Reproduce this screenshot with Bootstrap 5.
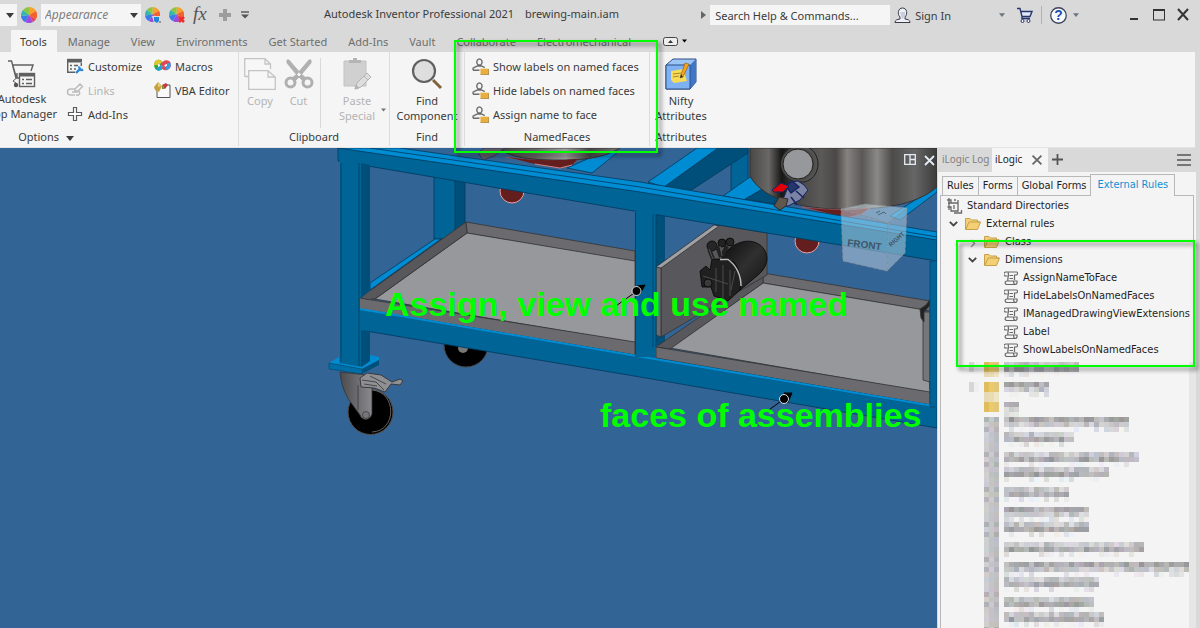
<!DOCTYPE html>
<html lang="en">
<head>
<meta charset="utf-8">
<meta name="viewport" content="width=device-width, initial-scale=1">
<title>Autodesk Inventor Professional 2021</title>
<link href="https://cdn.jsdelivr.net/npm/bootstrap@5.3.0/dist/css/bootstrap.min.css" rel="stylesheet">
<style>
:root{--bar:#d9d9d9;--face:#f5f5f5;--ink:#3b3b3b;--mark:#0f0}
body{font:11px/15px "Noto Sans","Open Sans",sans-serif;color:var(--ink);background:var(--bar)}
button{font:inherit;color:inherit;border:0;background:none;padding:0}
svg{display:block;flex:none;overflow:visible}
.titlebar{height:30px;background:var(--bar)}
.pick{position:relative;height:22px;background:var(--face)}
.pick.material{width:17px}
.pick.appearance{width:100px}
.pick select{appearance:none;border:0;background:none;width:100%;height:22px;padding:0 4px;font-style:italic;font-size:12px;line-height:20px;color:#808080}
.pick svg{position:absolute;right:3px;top:9px;pointer-events:none}
.doc-title{margin:0 0 3px 67px}
.search-box{width:180px;height:20px;border:0;background:var(--face);color:var(--ink);padding:0 5px;border-radius:0}
.search-box::placeholder{color:var(--ink);opacity:1}
.tabs{height:22px;background:var(--bar);padding-left:11px;gap:1px}
.tabs a{color:#6e6e6e;text-decoration:none;padding:3px 10px 0 9px;line-height:17px}
.tabs a+a{padding-left:10px}
.tabs a.on{background:var(--face);color:var(--ink)}
.ribbon{height:96px;background:var(--face);margin-right:5px;border-bottom:1px solid #e4e4e4}
.rgroup{border-right:1px solid #dcdcdc;margin-bottom:1px;height:94px;padding-top:2px}
.rbody{height:75px}
.big{text-align:center;display:flex;flex-direction:column;align-items:center;padding-top:4px;white-space:nowrap}
.big svg{margin-bottom:3px}
.small-tool{height:24px;display:flex;align-items:center;white-space:nowrap}
.dim{color:#b4b4b4}
.caption{text-align:center;line-height:15px}
.outline{position:absolute;border:2px solid var(--mark);filter:drop-shadow(3px 3px 2px rgba(0,0,0,.55));pointer-events:none;z-index:5}
.scene{position:relative;background:#336496;overflow:hidden;min-width:0}
.scene>svg{position:absolute;left:0;top:0;width:937px;height:480px}
.note{position:absolute;margin:0;font:bold 34px/40px "Liberation Sans",Arial,sans-serif;color:var(--mark);white-space:nowrap}
.vtools{position:absolute;right:2px;top:6px}
.side{width:263px;background:var(--bar);padding-left:1px;font-family:"DejaVu Sans Condensed","Liberation Sans",sans-serif;font-size:11px;color:#1e1e1e}
.dock{height:24px;font-family:"Noto Sans","Open Sans",sans-serif;font-size:10px;white-space:nowrap}
.dock-on{background:var(--face);width:56px;padding:0 6px 0 3px}
.pane{background:#f4f4f4;margin-right:4px;padding:2px 2px 0;min-height:0}
.subtabs{padding-left:2px}
.subtabs button{border:1px solid #b8b8b8;border-left-width:0;border-bottom:0;height:19px;padding:0 4px;margin-top:2px;white-space:nowrap}
.subtabs button:first-child{border-left-width:1px}
.subtabs button.on{height:22px;margin:0 0 -1px -1px;background:#f4f4f4;color:#1290d2;border-left-width:1px;padding:0 6px 2px;position:relative}
.treebox{border:1px solid #b8b8b8;border-bottom:0;min-height:0;padding-top:1px}
.treebox ul{list-style:none;margin:0;padding:0}
.trow{height:18px;display:flex;align-items:center;white-space:nowrap;gap:5px}
.mosaic{height:267px;margin-top:3px}
.page{height:100vh;overflow:hidden}
</style>
</head>
<body>
<svg width="0" height="0" class="position-absolute" aria-hidden="true">
<defs>
<symbol id="wheel" viewBox="-8 -8 16 16"><path fill="#f9a12c" d="M0 0V-8A8 8 0 0 1 7-4z"/><path fill="#f4622c" d="M0 0L7-4A8 8 0 0 1 7 4z"/><path fill="#e8455a" d="M0 0L7 4A8 8 0 0 1 4 7z"/><path fill="#9b4be0" d="M0 0L4 7A8 8 0 0 1-4 7z"/><path fill="#3a7be8" d="M0 0L-4 7A8 8 0 0 1-8 1z"/><path fill="#35b5b0" d="M0 0L-8 1A8 8 0 0 1-6-5z"/><path fill="#8cc63f" d="M0 0L-6-5A8 8 0 0 1 0-8z"/></symbol>
<symbol id="caret" viewBox="0 0 8 5"><path d="M0 0H8L4 5z" fill="currentColor"/></symbol>
<symbol id="who" viewBox="0 0 16 16"><path d="M1 11.500V9.500L5 7.500H9L12 9M1 11.500H7M7 .8A2.800 3 0 0 1 9 5.500C8.500 7 5.500 7 5 5.500A2.800 3 0 0 1 7 .8z" fill="none" stroke="#6b6b6b" stroke-width="1.300"/><path d="M7.500 10H16V16H8V11z" fill="#e8ad3c"/><path d="M8 16H16V11" fill="none" stroke="#8f8260"/></symbol>
<symbol id="folder" viewBox="0 0 16 13"><path d="M.5 12V1.500H5L6.500 3H12.500V5H15.500L12.500 12.500H.5z" fill="#f3d074" stroke="#c9a04a"/><path d="M1 12L4 5H15" fill="none" stroke="#c9a04a"/></symbol>
<symbol id="scroll" viewBox="0 0 14 14"><path d="M3.500 5H1.500A1.800 1.800 0 0 1 2 1H12.500C14 1 14 4 12 4H10.500V9M4 1.500C5.500 4 3 8 4 10M10 10H13C13.500 13 12 13.500 11 13.500H3C.5 13.500.5 10 3 10H9.500C9.500 12.500 10 13 11 13.500M5.500 4.500H9M5.500 7.500H9" fill="none" stroke="#686868" stroke-width="1.200"/></symbol>
<symbol id="down" viewBox="0 0 9 6"><path d="M.8.8L4.500 4.500L8.200.8" fill="none" stroke="#444" stroke-width="1.800"/></symbol>
</defs></svg>

<div class="page d-flex flex-column">
<header class="position-relative" style="z-index:2">
  <div class="titlebar d-flex align-items-center">
    <button class="pick material" aria-label="Material"><svg width="8" height="5"><use href="#caret"/></svg></button>
    <svg class="ms-1" width="16" height="16"><use href="#wheel"/></svg>
    <div class="pick appearance ms-1"><select aria-label="Appearance"><option>Appearance</option></select><svg width="8" height="5"><use href="#caret"/></svg></div>
    <div class="d-flex align-items-center gap-2 ms-1">
      <button aria-label="Adjust"><svg width="16" height="16" viewBox="0 0 16 16"><use href="#wheel" width="15" height="15"/><path d="M7 9H16V16H9z" fill="#d9d9d9"/><path d="M9 10H14V14L12 16L9 14z" fill="#2485d8"/><path d="M14 15H16" stroke="#555"/></svg></button>
      <button aria-label="Clear"><svg width="16" height="16" viewBox="0 0 16 16"><use href="#wheel" width="15" height="15"/><path d="M10 10L15 15M15 10L10 15" stroke="#ee2b2b" stroke-width="2.500"/></svg></button>
      <button aria-label="Parameters"><svg width="16" height="20" viewBox="0 0 16 20"><text x="0" y="15" font-family="Liberation Serif,serif" font-style="italic" font-size="19" fill="#555">fx</text></svg></button>
      <button aria-label="Add"><svg width="16" height="16" viewBox="0 0 16 16"><path d="M6 2H10V6H14V10H10V14H6V10H2V6H6z" fill="#9d9d9d"/></svg></button>
      <button class="nudge" aria-label="More"><svg width="12" height="16" viewBox="4 0 12 16"><path d="M4 5H12" stroke="#555" stroke-width="1.400"/><path d="M4 7.500H12L8 11.500z" fill="#555"/></svg></button>
    </div>
    <div class="doc-title text-nowrap ps-1">Autodesk Inventor Professional 2021 <span class="ms-2">brewing-main.iam</span></div>
    <div class="d-flex align-items-center ms-auto">
      <svg width="5" height="8" viewBox="0 0 5 8"><path d="M0 0L5 4L0 8z" fill="#666"/></svg>
      <input class="search-box mx-1" type="search" placeholder="Search Help &amp; Commands..." aria-label="Search help and commands">
      <button class="d-flex align-items-center"><svg class="me-1" width="17" height="17" viewBox="0 0 17 17"><path d="M1 15.500C1 13 3 12.500 6 12V10C3 7 4 1 8.500 1S14 7 11 10V12C14 12.500 16 13 16 15.500z" fill="#eef1f7" stroke="#3a3a44"/><path d="M6 5H11V10L8 12z" fill="#c9cfdd"/></svg>Sign In<svg class="text-secondary ms-5" width="6" height="4"><use href="#caret"/></svg></button>
      <button style="margin-left:11px" aria-label="App store"><svg width="17" height="16" viewBox="0 0 17 16"><path d="M1 1.500H4L6 9.500H14L16 4.500H5M6 9.500V11.500H14" fill="#e2e8f6" stroke="#27356b" stroke-width="1.400"/><circle cx="6.500" cy="14" r="1.500" fill="#fff" stroke="#27356b"/><circle cx="12.500" cy="14" r="1.500" fill="#fff" stroke="#27356b"/></svg></button>
      <div class="vr align-self-center mx-2" style="height:18px"></div>
      <button class="d-flex align-items-center" aria-label="Help"><svg width="17" height="17" viewBox="0 0 16 16"><circle cx="8" cy="8" r="7.300" fill="#f6f8fc" stroke="#3c4358" stroke-width="1.200"/><text x="8" y="12.500" text-anchor="middle" font-family="Liberation Sans,sans-serif" font-weight="bold" font-size="13" fill="#1a4fb4">?</text></svg><svg class="text-secondary" style="margin-left:6px" width="6" height="4"><use href="#caret"/></svg></button>
      <button style="margin-left:50px" aria-label="Minimize"><svg width="10" height="12" viewBox="0 0 10 12"><path d="M1 10H9" stroke="#333" stroke-width="2"/></svg></button>
      <button style="margin-left:14px" aria-label="Maximize"><svg width="12" height="12" viewBox="0 0 12 12"><rect x=".5" y="1" width="11" height="10" fill="none" stroke="#333"/><path d="M0 1H12" stroke="#333" stroke-width="2"/></svg></button>
      <button style="margin:0 11px 0 12px" aria-label="Close"><svg width="12" height="14" viewBox="0 0 12 14"><path d="M1 1L11 12M11 1L1 12" stroke="#333" stroke-width="2"/></svg></button>
    </div>
  </div>
  <nav class="tabs d-flex align-items-stretch">
    <a href="#" class="on">Tools</a><a href="#">Manage</a><a href="#">View</a><a href="#">Environments</a><a href="#">Get Started</a><a href="#">Add-Ins</a><a href="#">Vault</a><a href="#">Collaborate</a><a href="#">Electromechanical</a>
    <button class="d-flex align-items-center gap-1" style="margin-left:21px" aria-label="Ribbon display"><svg width="15" height="9" viewBox="0 0 15 9"><rect x=".5" y=".5" width="14" height="8" rx="2" fill="#eee" stroke="#444"/><path d="M5 6L7.500 3L10 6z" fill="#333"/></svg><svg width="5" height="4" class="text-black"><use href="#caret"/></svg></button>
  </nav>
  <div class="ribbon d-flex">
    <section class="rgroup" style="width:239px;overflow:hidden">
      <div class="rbody d-flex">
        <button class="big align-self-start" style="width:76px;margin-left:-16px"><svg width="28" height="30" viewBox="0 0 28 30"><path d="M0 3H3.500L8.500 20M4.500 7H25L23 13M9 15V20M4.500 7L8 20H11" fill="none" stroke="#606060" stroke-width="1.400"/><circle cx="8" cy="27" r="2.200" fill="#555"/><path d="M8.500 20L5 23L8 25" fill="none" stroke="#606060"/><rect x="11.500" y="15.500" width="15" height="13" fill="#f5f5f5" stroke="#606060" stroke-width="1.400"/><path d="M11 17H27" stroke="#606060" stroke-width="3"/><path d="M14 21.500H16M18 21.500H24M14 25.500H16M18 25.500H24" stroke="#606060" stroke-width="1.400"/></svg>Autodesk<br>App Manager</button>
        <div style="margin-left:7px;width:87px">
          <button class="small-tool"><svg class="me-1" width="17" height="16" viewBox="0 0 17 16"><path d="M.7 2V14.300H8M14.300 5V8M0 2.500H15" fill="none" stroke="#606060" stroke-width="1.400"/><path d="M0 .8H15V4.500H0z" fill="#606060"/><path d="M3 7.500H5M3 11H5M7 7.500H11M7 11H9" stroke="#606060" stroke-width="1.500"/><path d="M9 15L13 11M12.500 8.500A2.400 2.400 0 0 0 16 11.500" stroke="#2485d8" stroke-width="2.400" fill="none"/></svg>Customize</button>
          <button class="small-tool dim" disabled><svg class="me-1" width="17" height="16" viewBox="0 0 17 16"><path d="M8 13H3.500A3 3 0 0 1 3.500 7H8M5 10H11M8 7L13 2L15.500 4.500L11 9H8zM12 9C14 13 11 13.500 9 13" fill="none" stroke="#bdbdbd" stroke-width="1.500"/></svg>Links</button>
          <button class="small-tool"><svg class="me-1" width="17" height="16" viewBox="0 0 17 16"><path d="M6.500 1.500H9.500V6.500H14.500V9.500H9.500V14.500H6.500V9.500H1.500V6.500H6.500z" fill="#fff" stroke="#5a5a5a" stroke-width="1.200"/></svg>Add-Ins</button>
        </div>
        <div>
          <button class="small-tool"><svg class="me-1" width="17" height="16" viewBox="0 0 17 16"><g fill="none" stroke-width="3.600"><path d="M8 7C6 2 2 3 2 7S5 12 8 9" stroke="#30a838"/><path d="M2 7C2 3 5 3 7 5" stroke="#e8c32c"/><path d="M3 10C5 12 7 10 8 8" stroke="#20a0d8"/><path d="M8 8C11 2 15 4 15 7S11 12 9 9" stroke="#e04858"/><path d="M12 10.500C15 10 15.500 7 14.500 5" stroke="#3d9be0"/></g></svg>Macros</button>
          <button class="small-tool"><svg class="me-1" width="17" height="18" viewBox="0 0 17 18"><path d="M3 9V16.500H16V4H13" fill="#fafafa" stroke="#555"/><path d="M0 6L4 1L8 5L5 11L1 9z" fill="#c4a23c"/><path d="M4 1L8 5L4 6z" fill="#e4cd78"/><path d="M8 4L12 2L14 4L11 8z" fill="#c03c40"/><path d="M8 4L11 8L8 8z" fill="#7d8c3a"/></svg>VBA Editor</button>
        </div>
      </div>
      <div class="caption" style="width:92px">Options <svg class="d-inline-block ms-1" width="8" height="5"><use href="#caret"/></svg></div>
    </section>
    <section class="rgroup" style="width:151px">
      <div class="rbody d-flex">
        <button class="big dim align-self-start" style="width:42px" disabled><svg width="32" height="32" viewBox="0 0 32 32"><path d="M.7 18.500V.7H21L26.500 6V11M21 .7V6H26.500M.7 18.500H4M4.700 12.700H24L31.300 19V31.300H4.700zM24 12.700V19H31" fill="#f7f7f7" stroke="#c4c4c4" stroke-width="1.300"/></svg>Copy</button>
        <button class="big dim align-self-start" style="width:35px" disabled><svg width="30" height="32" viewBox="0 0 30 32"><g fill="none" stroke="#b0b0b0"><circle cx="6.500" cy="24.500" r="4.500" stroke-width="3"/><circle cx="23.500" cy="24.500" r="4.500" stroke-width="3"/></g><path d="M3 2V5L13 17L20 24L22 20L17 16L5 2zM27 2V5L17 17L10 24L8 20L13 16L25 2z" fill="#b0b0b0" stroke="#b0b0b0"/></svg>Cut</button>
        <div class="vr ms-1 me-1 mt-1" style="height:70px;opacity:.15"></div>
        <button class="big dim align-self-start position-relative" style="width:64px" disabled><svg width="28" height="32" viewBox="0 0 28 32"><path d="M1 3H23V28H1z" fill="#d0d0d0" stroke="#c2c2c2"/><path d="M6 5V2H10V0H14V2H18V5z" fill="#b4b4b4"/><path d="M12 31L14 25L24 15L28 19L18 29z" fill="#dedede" stroke="#b4b4b4"/><path d="M21 18L25 22M12 31L13 27L16 30z" stroke="#b4b4b4" fill="#b4b4b4"/></svg>Paste<br>Special<svg class="position-absolute text-secondary m-0" style="right:3px;top:54px" width="5" height="4"><use href="#caret"/></svg></button>
      </div>
      <div class="caption">Clipboard</div>
    </section>
    <section style="width:74px;padding-top:2px">
      <div class="rbody"><button class="big mx-auto"><svg width="32" height="32" viewBox="0 0 32 32"><path d="M22 22L30 30" stroke="#80623c" stroke-width="3"/><circle cx="13" cy="13" r="11" fill="#dedede" stroke="#606060" stroke-width="2.200"/></svg>Find<br>Component</button></div>
      <div class="caption">Find</div>
    </section>
    <section class="rgroup position-relative" style="width:186px;border-left:1px solid #dcdcdc">
      <div class="rbody" style="padding-left:7px">
        <button class="small-tool"><svg class="me-1" width="17" height="17"><use href="#who"/></svg>Show labels on named faces</button>
        <button class="small-tool"><svg class="me-1" width="17" height="17"><use href="#who"/></svg>Hide labels on named faces</button>
        <button class="small-tool"><svg class="me-1" width="17" height="17"><use href="#who"/></svg>Assign name to face</button>
      </div>
      <div class="caption">NamedFaces</div>
      <div class="outline" style="inset:-12px -9px -7px -11px"></div>
    </section>
    <section style="width:62px;padding-top:2px">
      <div class="rbody"><button class="big mx-auto"><svg width="32" height="32" viewBox="0 0 32 32"><path d="M1 7L8 1H31V24L25 31H1z" fill="#9cc4f4" stroke="#2c4e86"/><path d="M25 7L31 1V24L25 31z" fill="#3f76c8"/><path d="M1 7H25V31H1z" fill="#7fb2f2" stroke="#2c4e86"/><path d="M6 13L18 11L22 23L9 25L6 22z" fill="#f8dc58"/><path d="M8 16L16 15M8 19L14 18" stroke="#a88828"/><path d="M15 20L20 5L24 6L18 19z" fill="#f6a21c" stroke="#8a5a18" stroke-width=".6"/><path d="M15 20L16 16L18 19z" fill="#333"/></svg>Nifty<br>Attributes</button></div>
      <div class="caption">Attributes</div>
    </section>
  </div>
</header>

<main class="d-flex flex-fill" style="min-height:0">
  <section class="scene flex-fill" aria-label="Model view">
  <svg viewBox="0 148 937 480" preserveAspectRatio="xMinYMin slice" aria-hidden="true">
    <defs>
      <linearGradient id="tank"><stop offset="0" stop-color="#4a4845"/><stop offset=".1" stop-color="#6a6866"/><stop offset=".17" stop-color="#161616"/><stop offset=".25" stop-color="#444"/><stop offset=".38" stop-color="#5c5a58"/><stop offset=".46" stop-color="#4a4846"/><stop offset=".52" stop-color="#85827f"/><stop offset=".6" stop-color="#5a5856"/><stop offset=".68" stop-color="#8b8986"/><stop offset=".76" stop-color="#4c4b49"/><stop offset=".88" stop-color="#666"/><stop offset="1" stop-color="#3c3b3a"/></linearGradient>
      <linearGradient id="tank2"><stop offset="0" stop-color="#444"/><stop offset=".3" stop-color="#666"/><stop offset=".55" stop-color="#a0a0a0"/><stop offset=".75" stop-color="#484848"/><stop offset="1" stop-color="#777"/></linearGradient>
      <linearGradient id="fork"><stop offset="0" stop-color="#4a4a4d"/><stop offset="1" stop-color="#8a8a8e"/></linearGradient>
      <linearGradient id="mot" x1="0" y1="0" x2="1" y2="1"><stop offset="0" stop-color="#0c0c0c"/><stop offset=".5" stop-color="#303030"/><stop offset="1" stop-color="#111"/></linearGradient>
    </defs>
    <g stroke="#003a5c" stroke-width=".8">
      <path d="M434 176H456V239H434z" fill="#006496"/><path d="M455 178H465V224L455 231z" fill="#004f7a"/>
      <path d="M435 239H441L370 290V283z" fill="#008cd2"/>
      <path d="M731 150H748V190H731z" fill="#006496"/>
      <path d="M718 148H748V153L690 191L664 187z" fill="#004f7a"/>
      <path d="M697 148H718L664 187L648 182z" fill="#008cd2"/>
      <path d="M750 177L723 196L745 200L764 188z" fill="#008cd2"/>
      <path d="M745 199L766 187L785 206z" fill="#004f7a"/>
      <path d="M937 186L890 216L900 220L937 192z" fill="#008cd2"/>
      <path d="M603 152L567 168L592 173L618 152z" fill="#008cd2"/>
    </g>
    <g fill="#641e1e" stroke="#f0a0a0"><circle cx="512" cy="191" r="12"/><circle cx="807" cy="241" r="12"/></g>
    <circle cx="466" cy="345" r="22" fill="#000" stroke="#444"/><circle cx="463" cy="348" r="5" fill="#777"/>
    <g stroke="#333" stroke-width=".8">
      <path d="M466 222L635 251V262L467 233z" fill="#6b6b6f"/><path d="M467 233L635 261V343L375 299z" fill="#97989c"/><path d="M466 222L467 233L375 299L360 298z" fill="#58575c"/><path d="M360 298L635 342V355L360 309z" fill="#6b6b6f"/>
    </g>
    <path d="M656 212H665V345H656z" fill="#004f7a"/>
    <g stroke="#333" stroke-width=".8">
      <path d="M763 273L930 301V311L763 283z" fill="#6b6b6f"/><path d="M763 283L925 310L930 393L670 348z" fill="#97989c"/><path d="M763 273V283L670 349L656 347z" fill="#58575c"/><path d="M656 347L930 392V405L656 358z" fill="#6b6b6f"/>
      <path d="M923 312H930V382L923 380z" fill="#77777b"/><path d="M920 309L926 305L931 298V304L924 312V322L921 318z" fill="#222"/>
      <path d="M661 267L719 225L767 233V275L661 337z" fill="#58575c"/><path d="M656 267H661V337L656 335z" fill="#6b6b6f"/><path d="M656 267L714 225L719 226L661 268z" fill="#a0a1a5"/>
    </g>
    <g stroke="#050505" stroke-width=".8">
      <path d="M722 257C730 244 748 236 760 245C770 253 769 266 758 275L740 290L728 288z" fill="url(#mot)"/>
      <path d="M700 271L706 266L710 270L712 259H722L734 262C740 270 742 280 740 290L728 301L714 296L711 287H702z" fill="#202020"/>
      <circle cx="712" cy="246" r="5" fill="#262626"/><circle cx="722" cy="243" r="4" fill="#222"/><circle cx="730" cy="242" r="4" fill="#262626"/><path d="M709 249L713 259M717 246L721 257M727 246L722 256" stroke-width="4" stroke="#222"/><path d="M709 249L713 259M720 246L722 256" stroke-width="1" stroke="#555"/>
      <circle cx="708" cy="283" r="4" fill="#3a3a3a"/><path d="M716 268V292M723 265V298M730 270V296M703 276L728 284M735 271L731 290" stroke="#555" fill="none"/><path d="M720 259.500H728C736 265 741 275 741 286" fill="none" stroke="#bbb" stroke-width="1.500"/>
    </g>
    <path d="M750 148H937V187C915 206 880 209 850 209C815 210 765 204 750 176z" fill="url(#tank)" stroke="#333"/>
    <path d="M802 207C820 209 845 211 870 208L862 214L846 218z" fill="#641e1e" stroke="#c06060" stroke-width=".5"/>
    <path d="M499 148H620C606 156 590 160 560 160C525 160 508 156 499 148z" fill="url(#tank2)" stroke="#333"/><path d="M506 157C530 161 555 161 578 159L572 165L560 168z" fill="#641e1e" stroke="#c06060" stroke-width=".5"/>
    <g stroke="#003a5c" stroke-width=".8">
      <path d="M338 148H400L640 182L937 232V242L640 193L338 149z" fill="#008cd2"/><path d="M370 148L640 187L937 237" fill="none"/>
      <path d="M338 148L640 192L937 240V261L640 212L338 161z" fill="#006496"/>
      <path d="M360 309L640 356L937 406V428L640 377L360 330z" fill="#006496"/>
    </g>
    <path d="M360 309L640 356.500L937 406.500" fill="none" stroke="#008cd2" stroke-width="2"/>
    <path d="M499 148H620C606 156 590 160 560 160C525 160 508 156 499 148z" fill="url(#tank2)" stroke="#333" stroke-width=".8"/><path d="M508 157C530 161 555 161 578 159L572 165L560 168L530 163z" fill="#641e1e"/><path d="M535 164L560 168L572 165" fill="none" stroke="#e89090" stroke-width=".8"/>
    <path d="M930 261H937V407H930z" fill="#006496" stroke="#004f7a"/>
    <path d="M635 211H656V357H635z" fill="#006496"/><path d="M635.500 212V354M656 214V347M653 214V347" stroke="#004668" fill="none"/>
    <path d="M338 158L361 161V367H340V162z" fill="#006496"/><path d="M361 163L370 165V362L361 367z" fill="#004f7a"/><path d="M341 163V362M359 163V366" stroke="#004668"/>
    <path d="M361 298L371 290V300z" fill="#58575c"/><path d="M360 298L371 300V311L360 309z" fill="#6b6b6f"/><path d="M360 309L371 311V331L360 330z" fill="#006496"/><path d="M360 298L371 300" stroke="#333" stroke-width=".8"/><path d="M360 309L371 311" stroke="#008cd2" stroke-width="2"/>
    <path d="M329 363L339 357V363L362 367L370 361V355L379 357V360L362 369z" fill="#008cd2"/><path d="M329 363L362 369V374L329 369z" fill="#006fa8" stroke="#004668" stroke-width=".6"/><path d="M362 369L379 360V365L362 374z" fill="#00507c"/>
    <circle cx="370.500" cy="412" r="22.500" fill="#000" stroke="#554c44"/><path d="M372 390C397 392 397 431 372 432" fill="none" stroke="#777" stroke-width=".8"/>
    <path d="M340 372L366 375L372 388V414C370 421 362 421 360 415L349 400C343 390 341 382 340 372z" fill="url(#fork)" stroke="#333" stroke-width=".8"/><path d="M358 385V410" stroke="#444"/><circle cx="366" cy="415" r="3.500" fill="#77777a" stroke="#333" stroke-width=".7"/>
    <path d="M360 378L367 373L381 375L392 382L400 379L403 381L400 385L391 384L385 392L374 388L361 387z" fill="#8f9094" stroke="#3a3a3a"/><path d="M362 380L376 382L384 390M370 376L386 384M364 384L377 386" stroke="#333" fill="none" stroke-width=".8"/>
    <path d="M478 153L484 148H505L494 156L483 160z" fill="#5c5b64" stroke="#2c2f55" stroke-width=".8"/>
    <ellipse cx="802" cy="164" rx="16" ry="18" fill="#565452" stroke="#222"/><circle cx="798" cy="164" r="17" fill="#4b4a48"/><circle cx="798" cy="164" r="15" fill="#97989c" stroke="#222"/>
    <path d="M798 181L804 185L808 190L800 200L788 206L776 207L775 202L784 197L790 182z" fill="#7c84a6" stroke="#17255e"/><path d="M786 186L792 181L799 187L791 193zM791 197L797 205M796 191L804 198" fill="#26366e" stroke="#17255e" stroke-width="1.500"/><path d="M774 206L779 197L788 199L786 206L780 210z" fill="#5f564e" stroke="#2a2a2a"/><path d="M772 190L781 183L789 186L783 192L774 192z" fill="#e00008" stroke="#17255e"/>
    <g stroke="#8a8f96" stroke-width=".7" stroke-dasharray="4 2"><path d="M841 209L865 204L907 208L888 223z" fill="#cde3ee" fill-opacity=".5"/><path d="M841 209L888 223L887 271L843 261z" fill="#c3d4e2" fill-opacity=".5"/><path d="M888 223L907 208L905 253L887 271z" fill="#a9c0d4" fill-opacity=".6"/></g>
    <path d="M876 213L880 211M878 215L884 212L886 214" stroke="#4c6478" fill="none"/>
    <text transform="translate(847 246) rotate(7)" font-family="Liberation Sans,sans-serif" font-weight="bold" font-size="10" fill="#3f5468">FRONT</text>
    <text transform="translate(891 247) rotate(-42)" font-family="Liberation Sans,sans-serif" font-weight="bold" font-size="6" fill="#3f5468">RIGHT</text>
    <g stroke="#000"><path d="M613 308L637 291M766 412L784 399" /><path d="M637 286L645 285L640 294zM784 393L792 393L788 402z" fill="#000"/></g><g fill="#000" stroke="#ddd"><circle cx="636.500" cy="291" r="4.500"/><circle cx="784" cy="399" r="4.500"/></g>
  </svg>
  <p class="note" style="left:385px;top:136px">Assign, view and use named</p>
  <p class="note" style="left:600px;top:247px">faces of assemblies</p>
  <div class="vtools d-flex gap-2"><button aria-label="Tile view"><svg width="12" height="12" viewBox="0 0 12 12"><path d="M.7.7H11.300V10.300H.7zM6 1V10M6 5.500H11" fill="none" stroke="#e4ecf4" stroke-width="1.300"/></svg></button><button aria-label="Close view"><svg width="11" height="11" viewBox="0 0 11 11"><path d="M1 1L10 10M10 1L1 10" stroke="#e4ecf4" stroke-width="1.800"/></svg></button></div>
  </section>

  <aside class="side d-flex flex-column flex-shrink-0">
    <div class="dock d-flex align-items-center">
      <button class="px-1" style="width:54px;color:#808080">iLogic Log</button>
      <div class="dock-on d-flex align-items-center h-100"><button class="me-auto" style="color:#222">iLogic</button><button aria-label="Close iLogic"><svg width="10" height="10" viewBox="0 0 9 9"><path d="M.5.5L8.500 8.500M8.500.5L.5 8.500" stroke="#666" stroke-width="1.600"/></svg></button></div>
      <button class="ms-1" aria-label="New tab"><svg width="11" height="11" viewBox="0 0 11 11"><path d="M5.500 0V11M0 5.500H11" stroke="#555" stroke-width="1.800"/></svg></button>
      <button class="ms-auto" style="margin-right:9px" aria-label="Panel menu"><svg width="14" height="12" viewBox="0 0 14 12"><path d="M0 1H14M0 6H14M0 11H14" stroke="#555" stroke-width="1.600"/></svg></button>
    </div>
    <div class="pane d-flex flex-column flex-fill">
      <div class="subtabs d-flex align-items-start"><button>Rules</button><button>Forms</button><button>Global Forms</button><button class="on">External Rules</button></div>
      <div class="treebox flex-fill">
        <div class="trow" style="padding-left:5px"><svg width="16" height="16" viewBox="0 0 16 16"><path d="M1 2H5V5H12V13H5V9H1.500M3 0V12M5 5H2M8 2H10M12 2V5M8 7V11M8 15H15.500V12" fill="none" stroke="#686868" stroke-width="1.300"/></svg>Standard Directories</div>
        <ul>
          <li><div class="trow" style="padding-left:8px"><svg style="margin-right:2px" width="9" height="6"><use href="#down"/></svg><svg width="16" height="13"><use href="#folder"/></svg>External rules</div>
          <ul style="padding-left:19px">
            <li class="trow" style="padding-left:9px"><svg class="mt-1" style="margin-right:2px" width="8" height="9" viewBox="0 0 8 9"><path d="M2 1L5.500 4.500L2 8" fill="none" stroke="#999" stroke-width="1.500"/></svg><svg width="16" height="13"><use href="#folder"/></svg>Class</li>
            <li class="position-relative"><div class="trow" style="padding-left:8px"><svg style="margin-right:2px" width="9" height="6"><use href="#down"/></svg><svg width="16" height="13"><use href="#folder"/></svg>Dimensions</div>
              <ul style="padding-left:44px">
                <li class="trow"><svg width="14" height="14"><use href="#scroll"/></svg>AssignNameToFace</li>
                <li class="trow"><svg width="14" height="14"><use href="#scroll"/></svg>HideLabelsOnNamedFaces</li>
                <li class="trow"><svg width="14" height="14"><use href="#scroll"/></svg>IManagedDrawingViewExtensions</li>
                <li class="trow"><svg width="14" height="14"><use href="#scroll"/></svg>Label</li>
                <li class="trow"><svg width="14" height="14"><use href="#scroll"/></svg>ShowLabelsOnNamedFaces</li>
              </ul>
              <div class="outline" style="inset:-11px -2px -8px -4px"></div>
            </li>
          </ul></li>
        </ul>
        <svg class="mosaic" id="mosaic" width="255" height="267" viewBox="941 361 255 267" shape-rendering="crispEdges" aria-hidden="true"></svg>
      </div>
    </div>
  </aside>
</main>
</div>
<script src="https://cdn.jsdelivr.net/npm/bootstrap@5.3.0/dist/js/bootstrap.bundle.min.js"></script>
<script>
// Pixelated rows: [grid row, cells wide, index of the strongest line]
const rows=[[0,15,1],[4,9,0],[8,3,0],[11,25,0],[14,14,1],[18,27,1],[21,21,1],[25,13,1],[29,17,0],[32,17,1],[36,28,1],[40,37,0],[43,19,1],[47,18,1],[50,20,1]];
let seed=7,out='<path d="M1189 361h7v267h-7z" fill="#e6e6e6"/>';
const rnd=()=>(seed=seed*16807%2147483647)/2147483647;
const cell=(x,k,c,h=5)=>out+=`<rect x="${x}" y="${361+k*5}" width="5" height="${h}" fill="${c}"/>`;
const grey=v=>`rgb(${v+(rnd()*14-7|0)},${v+(rnd()*8-4|0)},${v+(rnd()*18-6|0)})`;
for(let k=0;k<10;k++)for(let i=0;i<3;i++)if(k!=3)cell(984+i*5,k,k%4<2?['#dfbd5c','#ecca68','#e2c77a'][i]:['#e6d9b8','#ebdcb0','#eee4c8'][i]);
for(let k=11;k<54;k++)for(let i=0;i<3;i++)cell(984+i*5,k,grey((k-11)%7==0||(k-11)%7==2?[178,200,178][i]:[205,195,190][i]));
for(const k of [0,1,4,5])for(let i=0;i<2;i++)cell(969+i*5,k,i?'#efefef':'#d6d6d6');
for(const [k,n,s] of rows)for(let i=0;i<n;i++)for(let j=0;j<3;j++){
  const base=j==s?172:j==(s?0:1)?200:234;
  if(j==2&&rnd()<.6)continue;
  cell(1004+i*5,k+j,grey(Math.min(240,base+(rnd()*44-22|0))));
}
document.getElementById('mosaic').innerHTML=out;
</script>
</body>
</html>
